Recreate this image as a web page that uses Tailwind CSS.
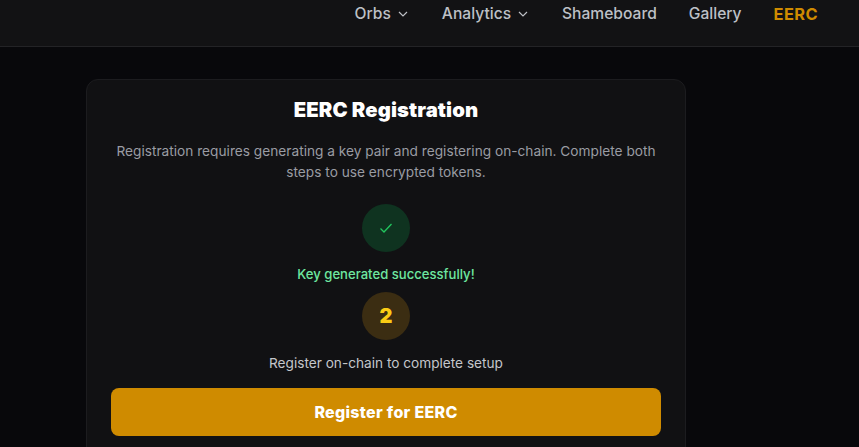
<!DOCTYPE html>
<html><head><meta charset="utf-8"><script src="https://cdn.jsdelivr.net/npm/@tailwindcss/browser@4"></script></head>
<body class="bg-[#08080b] overflow-hidden">
<div class="w-[859px] h-[447px] overflow-hidden flex flex-col font-['Inter',sans-serif]">
<nav class="h-[47px] shrink-0 bg-[#121214] border-b border-[#232326] flex justify-end items-start pt-[5px] pr-[41px] gap-8 text-[15.6px] leading-[18px] font-medium text-[#bdc0c6]">
<span class="flex items-center gap-[6px] mr-[1px]">Orbs<svg class="w-[12px] h-[12px]" viewBox="0 0 12 12" fill="none" stroke="currentColor" stroke-width="1.2"><path d="M2 4l4 4 4-4"/></svg></span>
<span class="flex items-center gap-[6px] mr-[1px]">Analytics<svg class="w-[12px] h-[12px]" viewBox="0 0 12 12" fill="none" stroke="currentColor" stroke-width="1.2"><path d="M2 4l4 4 4-4"/></svg></span>
<span>Shameboard</span>
<span>Gallery</span>
<span class="text-[#cf8b00] font-bold text-[16.4px] tracking-[0.4px]">EERC</span>
</nav>
<main class="pl-[86px] pt-[32px]">
<section class="w-[600px] h-[420px] bg-[#111113] border border-[#1c1c1f] rounded-xl px-6 pt-[17px] flex flex-col items-center">
<h1 class="text-[20.3px] leading-[26px] font-black text-white tracking-[0.1px]">EERC Registration</h1>
<p class="mt-[18px] w-[550px] text-center text-[13.7px] leading-[21px] text-[#9a9ca3]">Registration requires generating a key pair and registering on-chain. Complete both steps to use encrypted tokens.</p>
<div class="mt-[21px] w-12 h-12 rounded-full bg-[#0f3320] flex items-center justify-center">
<svg class="w-4 h-4 text-[#22c55e]" viewBox="0 0 16 16" fill="none" stroke="currentColor" stroke-width="1.3"><path d="M2.5 8.5l3.5 3.5 7.5-8"/></svg>
</div>
<p class="mt-[13px] text-[13.1px] leading-[18px] font-medium text-[#6ee7a0]">Key generated successfully!</p>
<div class="mt-[9px] w-12 h-12 rounded-full bg-[#3b2d12] flex items-center justify-center text-[#facc15] text-[20px] font-black">2</div>
<p class="mt-[13px] text-[13.65px] leading-[20px] text-[#c4c6cb]">Register on-chain to complete setup</p>
<button class="mt-[15px] w-[550px] h-12 shrink-0 rounded-lg bg-[#cf8b00] text-white text-[16px] font-extrabold tracking-[0.3px]">Register for EERC</button>
</section>
</main>
</div>
</body></html>
